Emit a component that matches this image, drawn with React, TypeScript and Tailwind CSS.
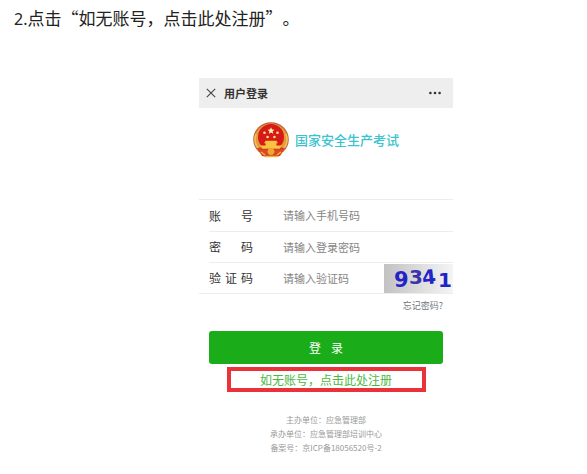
import React from 'react';

interface FieldProps {
  id: string;
  label: string;
  placeholder: string;
  type?: string;
  children?: React.ReactNode;
}

const Field: React.FC<FieldProps> = ({ id, label, placeholder, type = 'text', children }) => {
  return (
    <div className="ml-2.5 flex h-[31px] items-center border-t border-[#ededed] first:ml-0 first:border-t-0 first:pl-2.5">
      <label htmlFor={id} className="flex w-11 shrink-0 justify-between text-xs text-[#333]">
        {label.split('').map((char) => (
          <span key={char}>{char}</span>
        ))}
      </label>
      <input
        id={id}
        type={type}
        placeholder={placeholder}
        className="ml-[30px] min-w-0 flex-1 bg-transparent text-[11px] text-[#333] outline-none placeholder:text-[#858585]"
      />
      {children}
    </div>
  );
};

const Emblem = () => (
  <svg viewBox="0 0 36 36" className="size-9" aria-hidden="true">
    <ellipse cx="18" cy="17.4" rx="17.8" ry="17.2" fill="#bf6040" />
    <ellipse cx="18" cy="17.6" rx="16.8" ry="16.2" fill="#e39a3a" />
    <path d="M3 12c-2 6-1 12 5 17M33 12c2 6 1 12-5 17" fill="none" stroke="#f3bd55" strokeWidth="1.6" />
    <path d="M4 26l5 8 5 1h8l5-1 5-8-6-1H10z" fill="#d5401f" />
    <circle cx="18" cy="15" r="13" fill="#d51a18" />
    <path d="M18 5.2l1 2.3 2.5.2-1.9 1.6.6 2.4-2.2-1.3-2.2 1.3.6-2.4-1.9-1.6 2.5-.2z" fill="#fff0b0" />
    <g fill="#ffdf90">
      <circle cx="11.5" cy="10.8" r="1.3" />
      <circle cx="24.5" cy="10.8" r="1.3" />
      <circle cx="14.6" cy="15" r="1.3" />
      <circle cx="21.4" cy="15" r="1.3" />
    </g>
    <path d="M12.5 18.8h11l1.4 2.4H11.1zM12.6 21.2h10.8v2.4H12.6zM7 23.4h22l-2.4 3.4H9.4z" fill="#f8c43f" />
    <path d="M5 26c4 3 7 2 9 2l4-1 4 1c2 0 5 1 9-2l-3 6-4 2-3-3-3 2-3-2-3 3-4-2z" fill="#dc4a22" />
    <circle cx="18" cy="29.6" r="3.4" fill="#eda738" />
    <path d="M8 30l4 3M28 30l-4 3M12 34.4h12" stroke="#f1b542" strokeWidth="1.5" />
  </svg>
);

const Captcha = () => (
  <svg viewBox="0 0 69 29" className="h-[29px] w-[69px] shrink-0" role="img" aria-label="9341">
    <defs>
      <linearGradient id="captcha-bg">
        <stop offset="0" stopColor="#c2c2c2" />
        <stop offset="1" stopColor="#f5f5f5" />
      </linearGradient>
    </defs>
    <rect width="69" height="29" fill="url(#captcha-bg)" />
    <g fill="#2323c8" fontFamily="DejaVu Sans" fontWeight="bold" fontSize="21">
      <text x="10" y="23">9</text>
      <text x="25" y="20" fontSize="20" fill="#3a35a8">3</text>
      <text x="38" y="20" fontSize="20" transform="rotate(-6 45 14)">4</text>
      <text x="54" y="23" fontSize="20">1</text>
    </g>
  </svg>
);

const footerLines = [
  '主办单位：应急管理部',
  '承办单位：应急管理部培训中心',
  '备案号：京ICP备18056520号-2',
];

export default function App() {
  return (
    <main
      lang="zh-CN"
      className="min-h-screen bg-white pt-1.5 font-['Noto_Sans_CJK_SC',sans-serif] [text-spacing-trim:space-all]"
    >
      <p className="pl-3.5 text-[17px] leading-6 text-[#222]">
        <span className="font-['Noto_Sans',sans-serif] text-base">2.</span>
        点击“如无账号，点击此处注册”。
      </p>

      <div className="mt-[47px] pl-[65px]">
        <section className="mx-auto w-full max-w-[254px]">
          <header className="flex h-[30px] items-center bg-[#eee] pr-3 pl-[7px] text-[#333]">
            <button type="button" aria-label="关闭">
              <svg viewBox="0 0 10 10" className="size-2.5" stroke="#444" strokeWidth="1.1">
                <path d="M.8.8l8.4 8.4M9.2.8L.8 9.2" />
              </svg>
            </button>
            <h1 className="ml-2 flex-1 text-[11px] font-bold">用户登录</h1>
            <button type="button" aria-label="更多">
              <svg viewBox="0 0 12 4" className="h-1 w-3" fill="#333">
                <circle cx="1.4" cy="2" r="1.3" />
                <circle cx="6" cy="2" r="1.3" />
                <circle cx="10.6" cy="2" r="1.3" />
              </svg>
            </button>
          </header>

          <div className="flex items-center justify-center gap-1.5 pt-3.5 text-[13px] font-medium text-[#3cc3d0]">
            <Emblem />
            国家安全生产考试
          </div>

          <form className="mt-[41px]" onSubmit={(e) => e.preventDefault()}>
            <div className="border-y border-[#ededed]">
              <Field id="account" label="账号" placeholder="请输入手机号码" />
              <Field id="password" label="密码" placeholder="请输入登录密码" type="password" />
              <Field id="captcha" label="验证码" placeholder="请输入验证码">
                <Captcha />
              </Field>
            </div>
            <div className="px-2.5">
              <div className="flex justify-end pt-1 text-[9px] leading-4 text-[#6f7880]">
                <a href="#forgot">忘记密码?</a>
              </div>
              <button
                type="submit"
                className="mt-[17px] flex h-[33px] w-full items-center justify-center gap-2.5 rounded-[3px] bg-[#1aad19] text-xs text-white"
              >
                <span>登</span>
                <span>录</span>
              </button>
            </div>
            <a
              href="#register"
              className="mx-auto mt-[3px] flex h-[25px] w-[199px] items-center justify-center border-4 border-[#ea3338] text-xs text-[#4db83f]"
            >
              如无账号，点击此处注册
            </a>
          </form>

          <footer className="mt-[21px] text-center text-[8px] leading-[14px] text-[#999]">
            {footerLines.map((line) => (
              <p key={line}>{line}</p>
            ))}
          </footer>
        </section>
      </div>
    </main>
  );
}
